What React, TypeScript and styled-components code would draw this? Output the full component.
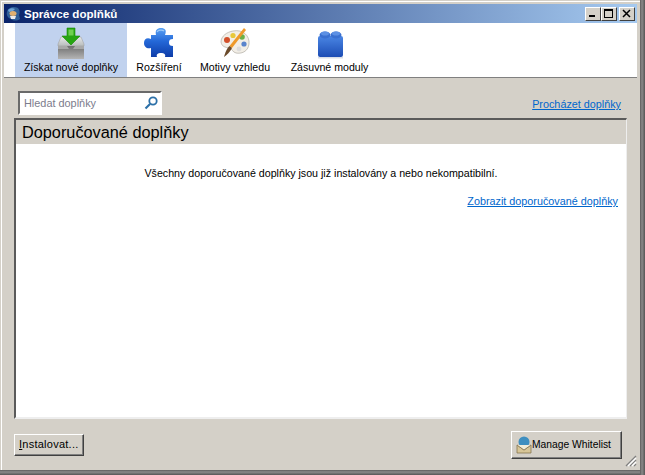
import React from "react";
import styled, { createGlobalStyle } from "styled-components";

const Global = createGlobalStyle`
  html, body { margin: 0; padding: 0; background: #3a3a3a; }
  #root { width: 645px; height: 475px; overflow: hidden; }
  * { box-sizing: border-box; }
`;
const Win = styled.div`
  width: 645px; height: 475px; position: relative; background: #d4d0c8;
  display: flex; flex-direction: column;
  padding: 4px 8px 5px 4px;
  font-family: "Liberation Sans", Arial, sans-serif; font-size: 10.7px; line-height: 13px; color: #000;
  box-shadow: inset 1px 1px 0 #d4d0c8, inset 2px 2px 0 #fff;
  &::after { content: ""; position: absolute; right: 0; top: 0; bottom: 0; width: 5px;
    background: linear-gradient(90deg, #5c5c5c, #8a8a8a 40%, #555); }
  &::before { content: ""; position: absolute; left: 0; right: 0; bottom: 0; height: 5px;
    background: linear-gradient(180deg, #5c5c5c, #8a8a8a 40%, #555); }
`;
const TitleBar = styled.div`
  height: 19px; display: flex; align-items: center; gap: 3px; padding: 0 2px 0 1px;
  background: linear-gradient(90deg, #0a246a, #a6caf0);
`;
const TitleText = styled.span`
  flex: 1; color: #fff; font-weight: 700; font-size: 11.6px; white-space: nowrap;
`;
const Caption = styled.button<{ $gap?: boolean }>`
  width: 16px; height: 14px; padding: 0; background: #d4d0c8; display: flex; align-items: center; justify-content: center;
  border: 1px solid; border-color: #fff #404040 #404040 #fff; margin-left: ${p => (p.$gap ? 2 : 0)}px;
`;
const CaptionGroup = styled.div`
  display: flex;
`;
const Toolbar = styled.div`
  height: 55px; background: #fff; border-bottom: 1px solid #808080; display: flex; padding-left: 11px; font-size: 10.6px;
`;
const Tab = styled.div<{ $w: number; $active?: boolean }>`
  width: ${p => p.$w}px; background: ${p => (p.$active ? "#c1d2ee" : "transparent")};
  display: flex; flex-direction: column; align-items: center; padding-top: 4px; white-space: nowrap;
  svg { height: 32px; width: 32px; margin-bottom: 2px; flex: none; }
`;
const SearchRow = styled.div`
  display: flex; justify-content: space-between; align-items: flex-start; padding: 13px 16px 0 14px; height: 40px;
`;
const Search = styled.div`
  width: 144px; height: 24px; background: #fff; border: 2px solid; border-color: #6a6a6a #fff #fff #6a6a6a;
  display: flex; align-items: center; justify-content: space-between; padding: 0 1px 0 4px; color: #7c7c8c; font-size: 10.9px;
`;
const LinkRow = styled.div`
  padding-top: 7px;
`;
const Link = styled.a`
  color: #0066cc; text-decoration: underline; white-space: nowrap; font-size: 10.8px;
`;
const Pane = styled.div`
  margin: 0 10px 0 10px; flex: 1; background: #fff; display: flex; flex-direction: column;
  border-style: solid; border-width: 2px 1px 2px 2px; border-color: #5a5a5a #eeeeee #eeeeee #5a5a5a;
`;
const PaneHead = styled.div`
  height: 24px; background: #d4d0c8; font-size: 16.3px; padding-left: 6px; line-height: 24px;
`;
const Msg = styled.div`
  text-align: center; margin-top: 23px; font-size: 10.67px;
`;
const MsgLink = styled.div`
  text-align: right; padding-right: 8px; margin-top: 15px;
`;
const Footer = styled.div`
  height: 51px; display: flex; justify-content: space-between; align-items: center; padding: 0 15px 0 10px;
`;
const Btn = styled.div<{ $w: number; $h: number; $fs: number; $ls?: number }>`
  height: ${p => p.$h}px; width: ${p => p.$w}px; background: #d4d0c8; display: flex; align-items: center; padding-left: 4px; white-space: nowrap;
  font-size: ${p => p.$fs}px; letter-spacing: ${p => p.$ls ?? 0}px;
  border: 1px solid; border-color: #fff #404040 #404040 #fff; box-shadow: inset -1px -1px 0 #808080;
  u { text-decoration: underline; }
  svg { flex: none; }
`;
const Grip = styled.svg`
  position: absolute; right: 8px; bottom: 8px; width: 12px; height: 12px; z-index: 2;
`;

const Arrow = () => (
  <svg viewBox="0 0 32 32">
    <defs>
      <linearGradient id="tr1" x1="0" y1="0" x2="0" y2="1"><stop offset="0" stopColor="#e6e8e8" /><stop offset="1" stopColor="#b8bcbc" /></linearGradient>
      <linearGradient id="tr2" x1="0" y1="0" x2="0" y2="1"><stop offset="0" stopColor="#6f6f6f" /><stop offset="1" stopColor="#b5b5b5" /></linearGradient>
    </defs>
    <path d="M6 10 H26 L29 17 V19 H3 V17 Z" fill="url(#tr1)" stroke="#9a9a9a" strokeWidth=".5" />
    <rect x="3" y="19" width="26" height="13" fill="url(#tr2)" />
    <path d="M3 19 H12 L14 22 H18 L20 19 H29 V22 H3 Z" fill="#a8a8a8" />
    <path d="M12 1 H20 V9 H25 L16 18 L7 9 H12 Z" fill="#27a512" stroke="#178a08" strokeWidth=".6" />
    <rect x="13.500" y="2.500" width="5" height="6" fill="#6fd050" />
  </svg>
);
const Puzzle = () => (
  <svg viewBox="0 0 32 32">
    <defs><linearGradient id="pz" x1="0" y1="0" x2="0" y2="1"><stop offset="0" stopColor="#5aa2f4" /><stop offset=".45" stopColor="#2468d8" /><stop offset="1" stopColor="#0e3ca8" /></linearGradient></defs>
    <path d="M8 8 H13 C12 3 14 1 18 1 C22 1 24 3 22 8 H30 V12 C27 12 26 13 26 15.500 C26 18 27 19 30 19 V30 H22 C23 27 21 26 18 26 C15 26 13 27 14 30 H8 V21 C4 22 1 20 1 16 C1 12 4 10 8 12 Z" fill="url(#pz)" />
    <path d="M14 5 C15 3 19 2.500 21 4" fill="none" stroke="#9ccaf8" strokeWidth="1.200" />
  </svg>
);
const Palette = () => (
  <svg viewBox="0 0 32 32">
    <path d="M14 4 C24 2 31 9 30 17 C29 25 22 27 17 26 C13 25 14 22 10 21 C6 20 3 20 2 15 C2 9 8 5 14 4 Z" fill="#f2eee6" stroke="#b0aca4" strokeWidth=".7" />
    <circle cx="8" cy="13" r="3" fill="#d2502a" />
    <circle cx="14" cy="8.500" r="2.600" fill="#e8c83a" />
    <circle cx="23" cy="10" r="2.800" fill="#6ab04a" />
    <circle cx="25" cy="17" r="2.600" fill="#5a84cc" />
    <circle cx="20" cy="22" r="2.400" fill="#dcdcdc" />
    <path d="M25 1 L27 3 L13 21 L10.500 19 Z" fill="#ef9a2a" />
    <path d="M10.500 19 L13 21 C11 25 8 28 5 30 C6 26 8 21 10.500 19 Z" fill="#6a4a2a" />
  </svg>
);
const Blocks = () => (
  <svg viewBox="0 0 32 32">
    <defs><linearGradient id="bl" x1="0" y1="0" x2="0" y2="1"><stop offset="0" stopColor="#4a86e4" /><stop offset="1" stopColor="#1c4cb4" /></linearGradient></defs>
    <rect x="4" y="9" width="25" height="21" rx="2" fill="url(#bl)" />
    <ellipse cx="11" cy="8" rx="5.500" ry="3.500" fill="#3a70d0" />
    <ellipse cx="22" cy="8" rx="5.500" ry="3.500" fill="#3a70d0" />
    <ellipse cx="11" cy="6.500" rx="4" ry="2" fill="#5c90e4" />
    <ellipse cx="22" cy="6.500" rx="4" ry="2" fill="#5c90e4" />
    <rect x="4" y="30" width="25" height="1.500" fill="#d8dde8" />
  </svg>
);

export default function App() {
  return (
    <Win>
      <Global />
      <TitleBar>
        <svg width="16" height="16" viewBox="0 0 16 16">
          <path d="M2 6 C3 1 9 0 13 2 C15 4 15 7 14 9 L15 13 C12 15 8 15 6 13 C3 12 1 9 2 6 Z" fill="#2f5f98" />
          <path d="M3 4 C5 2 8 2 10 3 L8 5 L4 6 Z" fill="#6fa4d4" />
          <ellipse cx="8" cy="7.500" rx="3.500" ry="2.500" fill="#e0b070" />
          <path d="M5 10 H11 L10 13 H6 Z" fill="#ececec" />
        </svg>
        <TitleText>Správce doplňků</TitleText>
        <CaptionGroup>
          <Caption>
            <svg width="10" height="9" viewBox="0 0 10 9"><rect x="1" y="6" width="6" height="2" fill="#000" /></svg>
          </Caption>
          <Caption>
            <svg width="10" height="9" viewBox="0 0 10 9"><path d="M0 0 H9 V9 H0 Z M1 2 V8 H8 V2 Z" fillRule="evenodd" fill="#000" /></svg>
          </Caption>
          <Caption $gap>
            <svg width="10" height="9" viewBox="0 0 10 9"><path d="M1 1 L8 8 M8 1 L1 8" stroke="#000" strokeWidth="1.500" /></svg>
          </Caption>
        </CaptionGroup>
      </TitleBar>
      <Toolbar>
        <Tab $active $w={112}><Arrow />Získat nové doplňky</Tab>
        <Tab $w={64}><Puzzle />Rozšíření</Tab>
        <Tab $w={88}><Palette />Motivy vzhledu</Tab>
        <Tab $w={101}><Blocks />Zásuvné moduly</Tab>
      </Toolbar>
      <SearchRow>
        <Search>
          Hledat doplňky
          <svg width="16" height="16" viewBox="0 0 16 16"><circle cx="10" cy="6" r="3.700" fill="none" stroke="#2c70a8" strokeWidth="1.800" /><path d="M7 9 L2.500 13.500" stroke="#2c70a8" strokeWidth="2.200" /></svg>
        </Search>
        <LinkRow><Link>Procházet doplňky</Link></LinkRow>
      </SearchRow>
      <Pane>
        <PaneHead>Doporučované doplňky</PaneHead>
        <Msg>Všechny doporučované doplňky jsou již instalovány a nebo nekompatibilní.</Msg>
        <MsgLink><Link>Zobrazit doporučované doplňky</Link></MsgLink>
      </Pane>
      <Footer>
        <Btn $w={70} $h={22} $fs={11} $ls={0.25}><u>I</u>nstalovat...</Btn>
        <Btn $w={111} $h={28} $fs={10.3}>
          <svg width="16" height="18" viewBox="0 0 16 18">
            <circle cx="8" cy="6" r="5.500" fill="#3f8fc0" />
            <path d="M1 9 L8 14 L15 9 V17 H1 Z" fill="#d8c698" stroke="#7d6a44" strokeWidth=".7" />
            <path d="M1 9 L8 14 L15 9" fill="#f2ecd8" stroke="#7d6a44" strokeWidth=".7" />
          </svg>
          Manage Whitelist
        </Btn>
      </Footer>
      <Grip viewBox="0 0 12 12">
        <path d="M11 1 L1 11 M11 5 L5 11 M11 9 L9 11" stroke="#808080" strokeWidth="1.400" />
        <path d="M11 3 L3 11 M11 7 L7 11" stroke="#fff" strokeWidth="1.400" />
      </Grip>
    </Win>
  );
}
